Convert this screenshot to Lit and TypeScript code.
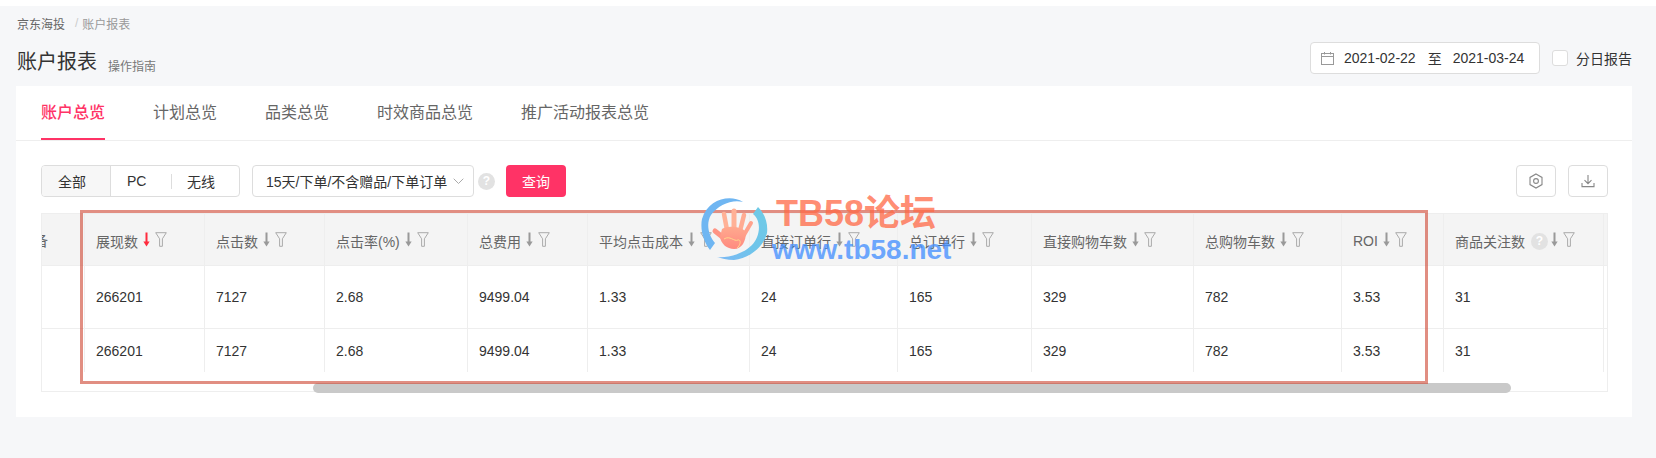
import { LitElement, html, css, svg } from "lit";
import { customElement } from "lit/decorators.js";

const COLS = [
  { label: "展现数", value: "266201", active: true },
  { label: "点击数", value: "7127" },
  { label: "点击率(%)", value: "2.68" },
  { label: "总费用", value: "9499.04" },
  { label: "平均点击成本", value: "1.33" },
  { label: "直接订单行", value: "24" },
  { label: "总订单行", value: "165" },
  { label: "直接购物车数", value: "329" },
  { label: "总购物车数", value: "782" },
  { label: "ROI", value: "3.53" },
  { label: "商品关注数", value: "31", help: true },
];

const arrow = (active?: boolean) => html`<svg class="arrow ${active ? "on" : ""}" width="7" height="15" viewBox="0 0 7 15"><path d="M3.5 0.5V10" stroke="currentColor" stroke-width="2" fill="none"/><path d="M0.4 9.4H6.6L3.5 14.6Z" fill="currentColor"/></svg>`;
const funnel = html`<svg class="funnel" width="12" height="15" viewBox="0 0 12 15"><path d="M0.7 0.7H11.3L7.4 6.8V14.3H4.6V6.8Z" stroke="currentColor" stroke-width="1" fill="none"/></svg>`;

const hand = svg`
  <defs>
    <linearGradient id="sw" x1="1" y1="0" x2="0" y2="1"><stop offset="0" stop-color="#6fcbe6"/><stop offset="0.55" stop-color="#6fc4ea"/><stop offset="1" stop-color="#7cb8f5"/></linearGradient>
    <linearGradient id="pg" x1="0.5" y1="0" x2="0.5" y2="1"><stop offset="0" stop-color="#ffa98e"/><stop offset="1" stop-color="#ff8a80"/></linearGradient>
  </defs>
  <path d="M43 7C30 -1 8 4 2 24C0 34 3 46 10 55L15 48C8 40 6 28 11 20C18 10 32 4 43 7Z" fill="#6fb6f2"/>
  <path d="M58 12C66 20 68 30 67 38C64 52 48 64 34 65C27 65 21 63 17 62C26 63 42 60 52 50C60 42 62 26 53 19Z" fill="url(#sw)"/>
  <g stroke-linecap="round" fill="none">
    <path d="M27 35L24 19" stroke-width="4.5" stroke="#ffb196"/>
    <path d="M34 35V16" stroke-width="5" stroke="#ffb196"/>
    <path d="M40 36L44 20" stroke-width="4.5" stroke="#ffab92"/>
    <path d="M44 40L51 28" stroke-width="4" stroke="#ffa28c"/>
    <path d="M25 44L15 36" stroke-width="5" stroke="#ff9484"/>
  </g>
  <path d="M22 34C28 30 42 32 46 37C46 46 42 54 34 54C27 54 21 49 20 42Z" fill="url(#pg)"/>
  <path d="M24 44C30 40 34 47 38 45C41 44 41 50 37 53" stroke="#ffd68c" stroke-width="1" fill="none"/>
`;

@customElement("app-root")
export class AppRoot extends LitElement {
  static styles = css`
    :host {
      display: block;
      width: 1656px;
      height: 458px;
      overflow: hidden;
      position: relative;
      font-family: "Liberation Sans", "Noto Sans CJK SC", sans-serif;
      font-size: 14px;
      color: #333;
    }
    .page {
      box-sizing: border-box;
      height: 458px;
      background: #f6f7f9;
      border-top: 6px solid #fff;
    }
    .crumbs {
      display: flex;
      align-items: center;
      height: 18px;
      padding: 8px 17px 0;
      font-size: 12px;
      color: #666;
    }
    .crumbs .sep { color: #ccc; margin: 0 4px 0 10px; }
    .crumbs .cur { color: #999; }
    .head {
      display: flex;
      justify-content: space-between;
      align-items: flex-start;
      height: 32px;
      padding: 10px 24px 12px 17px;
    }
    .title { display: flex; align-items: center; margin-top: 6px; }
    .title h1 { margin: 0; font-size: 20px; font-weight: 400; color: #333; line-height: 28px; }
    .title span { font-size: 12px; color: #777; margin: 7px 0 0 11px; }
    .range { display: flex; align-items: center; }
    .date {
      box-sizing: border-box;
      display: flex;
      align-items: center;
      width: 230px;
      height: 32px;
      padding-left: 10px;
      background: #fff;
      border: 1px solid #ddd;
      border-radius: 4px;
    }
    .date svg { margin-right: 10px; color: #999; }
    .date .to { margin: 0 11px 0 12px; }
    .check {
      box-sizing: border-box;
      width: 16px;
      height: 16px;
      margin: 0 8px 0 12px;
      background: #fff;
      border: 1px solid #ddd;
      border-radius: 3px;
    }
    .card {
      box-sizing: border-box;
      width: 1616px;
      height: 331px;
      margin-left: 16px;
      background: #fff;
    }
    .tabs {
      display: flex;
      gap: 48px;
      height: 54px;
      padding-left: 25px;
      border-bottom: 1px solid #eee;
    }
    .tab {
      box-sizing: border-box;
      height: 54px;
      line-height: 54px;
      font-size: 16px;
      color: #666;
    }
    .tab.on {
      color: #ff3366;
      font-weight: 500;
      border-bottom: 2px solid #ff3366;
    }
    .toolbar {
      display: flex;
      align-items: center;
      height: 32px;
      margin-top: 24px;
      padding: 0 24px 0 25px;
    }
    .seg {
      box-sizing: border-box;
      display: flex;
      width: 199px;
      height: 32px;
      border: 1px solid #ddd;
      border-radius: 4px;
      overflow: hidden;
    }
    .seg div { display: flex; align-items: center; color: #333; box-sizing: border-box; }
    .seg .a { width: 69px; padding-left: 16px; background: #f7f7f7; border-right: 1px solid #ddd; }
    .seg .b { width: 61px; padding-left: 16px; position: relative; }
    .seg .b::after { content: ""; position: absolute; right: 0; top: 8px; height: 15px; width: 1px; background: #ddd; }
    .seg .c { padding-left: 15px; }
    .select {
      box-sizing: border-box;
      display: flex;
      align-items: center;
      justify-content: space-between;
      width: 222px;
      height: 32px;
      margin-left: 12px;
      padding: 0 9px 0 13px;
      border: 1px solid #ddd;
      border-radius: 4px;
      white-space: nowrap;
    }
    .select svg { color: #aaa; }
    .help {
      display: inline-flex;
      align-items: center;
      justify-content: center;
      flex: none;
      width: 17px;
      height: 17px;
      border-radius: 50%;
      background: #e2e2e2;
      color: #fff;
      font-size: 12px;
      font-weight: 700;
    }
    .toolbar .help { margin-left: 4px; }
    .query {
      display: flex;
      align-items: center;
      justify-content: center;
      width: 60px;
      height: 32px;
      margin-left: 11px;
      background: #ff3366;
      border-radius: 4px;
      color: #fff;
    }
    .tools { display: flex; gap: 12px; margin-left: auto; }
    .tool {
      box-sizing: border-box;
      display: flex;
      align-items: center;
      justify-content: center;
      width: 40px;
      height: 32px;
      border: 1px solid #ddd;
      border-radius: 4px;
      color: #888;
    }
    .table {
      box-sizing: border-box;
      width: 1567px;
      height: 179px;
      margin: 16px 0 0 25px;
      border: 1px solid #eee;
    }
    .grid {
      display: grid;
      grid-template-columns: 42px 120px 120px 143px 120px 162px 148px 134px 162px 148px 102px 160px 4px;
      grid-template-rows: 52px 63px 43px;
    }
    .cell {
      box-sizing: border-box;
      display: flex;
      align-items: center;
      min-width: 0;
      padding: 0 11px;
      border-left: 1px solid #eee;
      white-space: nowrap;
      overflow: hidden;
    }
    .cell.first { border-left: 0; padding: 0 36px 0 0; justify-content: flex-end; }
    .cell.edge { padding: 0; }
    .th { background: #f4f4f4; color: #666; padding-top: 3px; border-bottom: 1px solid #eee; }
    .td { color: #333; }
    .r1 { border-bottom: 1px solid #eee; }
    .arrow { flex: none; color: #999; margin-left: 5px; margin-top: -4px; }
    .arrow.on { color: #ff2b3d; }
    .funnel { flex: none; color: #aaa; margin-left: 5px; margin-top: -4px; }
    .th .help { margin-left: 6px; margin-right: -2px; }
    .track { display: flex; align-items: flex-end; height: 20px; }
    .thumb {
      width: 1198px;
      height: 10px;
      margin: 0 0 -1px 271px;
      background: #c9c9c9;
      border-radius: 5px;
    }
    .redbox {
      position: absolute;
      box-sizing: border-box;
      left: 80px;
      top: 210px;
      width: 1348px;
      height: 174px;
      border: 3px solid rgba(206, 72, 54, 0.62);
      pointer-events: none;
    }
    .logo { position: absolute; left: 700px; top: 195px; }
    .wm1, .wm2 { position: absolute; font-weight: 700; white-space: nowrap; line-height: 1; }
    .wm1 { left: 776px; top: 196px; font-size: 36px; color: rgba(255, 105, 70, 0.75); }
    .wm2 { left: 772px; top: 236px; font-size: 28px; color: rgba(70, 145, 255, 0.78); }
  `;

  private head(c: (typeof COLS)[number]) {
    return html`<div class="cell th">
      <span>${c.label}</span>
      ${c.help ? html`<span class="help">?</span>` : ""}
      ${arrow(c.active)}${funnel}
    </div>`;
  }

  render() {
    return html`
      <div class="page">
        <div class="crumbs"><span>京东海投</span><span class="sep">/</span><span class="cur">账户报表</span></div>
        <div class="head">
          <div class="title"><h1>账户报表</h1><span>操作指南</span></div>
          <div class="range">
            <div class="date">
              <svg width="13" height="13" viewBox="0 0 13 13" fill="none" stroke="currentColor"><rect x="0.5" y="1.5" width="12" height="11"/><path d="M0.5 4.5H12.5M3.5 0V2.5M9.5 0V2.5"/></svg>
              <span>2021-02-22</span><span class="to">至</span><span>2021-03-24</span>
            </div>
            <div class="check"></div><span>分日报告</span>
          </div>
        </div>
        <div class="card">
          <div class="tabs">
            <div class="tab on">账户总览</div>
            <div class="tab">计划总览</div>
            <div class="tab">品类总览</div>
            <div class="tab">时效商品总览</div>
            <div class="tab">推广活动报表总览</div>
          </div>
          <div class="toolbar">
            <div class="seg"><div class="a">全部</div><div class="b">PC</div><div class="c">无线</div></div>
            <div class="select">
              <span>15天/下单/不含赠品/下单订单</span>
              <svg width="11" height="7" viewBox="0 0 11 7" fill="none" stroke="currentColor"><path d="M0.7 0.7L5.5 5.5L10.3 0.7"/></svg>
            </div>
            <span class="help">?</span>
            <div class="query">查询</div>
            <div class="tools">
              <div class="tool"><svg width="14" height="16" viewBox="0 0 14 16" fill="none" stroke="currentColor" stroke-width="1.1"><path d="M7 1L13 4.4V11.6L7 15L1 11.6V4.4Z"/><circle cx="7" cy="8" r="2.4"/></svg></div>
              <div class="tool"><svg width="14" height="14" viewBox="0 0 14 14" fill="none" stroke="currentColor" stroke-width="1.1"><path d="M7 1V9.5M3.5 6.2L7 9.7L10.5 6.2M1 9V12.6H13V9"/></svg></div>
            </div>
          </div>
          <div class="table">
            <div class="grid">
              <div class="cell th first"><span>备</span></div>
              ${COLS.map((c) => this.head(c))}
              <div class="cell th edge"></div>
              <div class="cell td r1 first"></div>
              ${COLS.map((c) => html`<div class="cell td r1">${c.value}</div>`)}
              <div class="cell td r1 edge"></div>
              <div class="cell td first"></div>
              ${COLS.map((c) => html`<div class="cell td">${c.value}</div>`)}
              <div class="cell td edge"></div>
            </div>
            <div class="track"><div class="thumb"></div></div>
          </div>
        </div>
      </div>
      <div class="redbox"></div>
      <svg class="logo" width="68" height="67" viewBox="0 0 68 67">${hand}</svg>
      <div class="wm1">TB58论坛</div>
      <div class="wm2">www.tb58.net</div>
    `;
  }
}
